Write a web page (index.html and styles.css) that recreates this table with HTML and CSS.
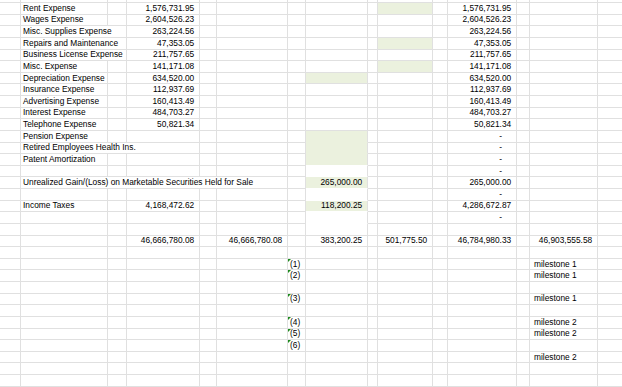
FILE: index.html
```html
<!DOCTYPE html>
<html>
<head>
<meta charset="utf-8">
<link rel="stylesheet" href="styles.css">
</head>
<body>
<table class="sheet">
<colgroup>
<col class="ca"><col class="cb"><col class="cc"><col class="cd"><col class="ce"><col class="cf"><col class="cg"><col class="ch"><col class="ci"><col class="cj"><col class="ck"><col class="cl"><col class="cm"><col class="cn"><col class="co">
</colgroup>
<tbody>
<tr class="edge"><td></td><td></td><td></td><td></td><td></td><td></td><td></td><td></td><td></td><td></td><td></td><td></td><td></td><td></td><td></td></tr>
<tr><td></td><td>Rent Expense</td><td></td><td class="n">1,576,731.95</td><td></td><td></td><td></td><td></td><td></td><td class="g"></td><td></td><td class="n">1,576,731.95</td><td></td><td></td><td></td></tr>
<tr><td></td><td>Wages Expense</td><td></td><td class="n">2,604,526.23</td><td></td><td></td><td></td><td></td><td></td><td></td><td></td><td class="n">2,604,526.23</td><td></td><td></td><td></td></tr>
<tr><td></td><td colspan="2">Misc. Supplies Expense</td><td class="n">263,224.56</td><td></td><td></td><td></td><td></td><td></td><td></td><td></td><td class="n">263,224.56</td><td></td><td></td><td></td></tr>
<tr><td></td><td colspan="2">Repairs and Maintenance</td><td class="n">47,353.05</td><td></td><td></td><td></td><td></td><td></td><td class="g"></td><td></td><td class="n">47,353.05</td><td></td><td></td><td></td></tr>
<tr><td></td><td colspan="2">Business License Expense</td><td class="n">211,757.65</td><td></td><td></td><td></td><td></td><td></td><td></td><td></td><td class="n">211,757.65</td><td></td><td></td><td></td></tr>
<tr><td></td><td>Misc. Expense</td><td></td><td class="n">141,171.08</td><td></td><td></td><td></td><td></td><td></td><td class="g"></td><td></td><td class="n">141,171.08</td><td></td><td></td><td></td></tr>
<tr><td></td><td>Depreciation Expense</td><td></td><td class="n">634,520.00</td><td></td><td></td><td></td><td class="g"></td><td></td><td></td><td></td><td class="n">634,520.00</td><td></td><td></td><td></td></tr>
<tr><td></td><td>Insurance Expense</td><td></td><td class="n">112,937.69</td><td></td><td></td><td></td><td></td><td></td><td></td><td></td><td class="n">112,937.69</td><td></td><td></td><td></td></tr>
<tr><td></td><td>Advertising Expense</td><td></td><td class="n">160,413.49</td><td></td><td></td><td></td><td></td><td></td><td></td><td></td><td class="n">160,413.49</td><td></td><td></td><td></td></tr>
<tr><td></td><td>Interest Expense</td><td></td><td class="n">484,703.27</td><td></td><td></td><td></td><td></td><td></td><td></td><td></td><td class="n">484,703.27</td><td></td><td></td><td></td></tr>
<tr><td></td><td>Telephone Expense</td><td></td><td class="n">50,821.34</td><td></td><td></td><td></td><td></td><td></td><td></td><td></td><td class="n">50,821.34</td><td></td><td></td><td></td></tr>
<tr><td></td><td>Pension Expense</td><td></td><td></td><td></td><td></td><td></td><td class="g gb"></td><td></td><td></td><td></td><td class="d">-</td><td></td><td></td><td></td></tr>
<tr><td></td><td colspan="3">Retired Employees Health Ins.</td><td></td><td></td><td></td><td class="g gb"></td><td></td><td></td><td></td><td class="d">-</td><td></td><td></td><td></td></tr>
<tr><td></td><td>Patent Amortization</td><td></td><td></td><td></td><td></td><td></td><td class="g wb"></td><td></td><td></td><td></td><td class="d">-</td><td></td><td></td><td></td></tr>
<tr><td></td><td></td><td></td><td></td><td></td><td></td><td></td><td class="wb"></td><td></td><td></td><td></td><td class="d">-</td><td></td><td></td><td></td></tr>
<tr><td></td><td colspan="5">Unrealized Gain/(Loss) on Marketable Securities Held for Sale</td><td></td><td class="g wb n">265,000.00</td><td></td><td></td><td></td><td class="n">265,000.00</td><td></td><td></td><td></td></tr>
<tr><td></td><td></td><td></td><td></td><td></td><td></td><td></td><td class="wb"></td><td></td><td></td><td></td><td class="d">-</td><td></td><td></td><td></td></tr>
<tr><td></td><td>Income Taxes</td><td></td><td class="n">4,168,472.62</td><td></td><td></td><td></td><td class="g wb n">118,200.25</td><td></td><td></td><td></td><td class="n">4,286,672.87</td><td></td><td></td><td></td></tr>
<tr><td></td><td></td><td></td><td></td><td></td><td></td><td></td><td class="wb"></td><td></td><td></td><td></td><td class="d">-</td><td></td><td></td><td></td></tr>
<tr><td></td><td></td><td></td><td></td><td></td><td></td><td></td><td></td><td></td><td></td><td></td><td></td><td></td><td></td><td></td></tr>
<tr><td></td><td></td><td></td><td class="n">46,666,780.08</td><td></td><td class="n">46,666,780.08</td><td></td><td class="n">383,200.25</td><td></td><td class="n">501,775.50</td><td></td><td class="n">46,784,980.33</td><td></td><td class="n">46,903,555.58</td><td></td></tr>
<tr><td></td><td></td><td></td><td></td><td></td><td></td><td></td><td></td><td></td><td></td><td></td><td></td><td></td><td></td><td></td></tr>
<tr><td></td><td></td><td></td><td></td><td></td><td></td><td class="t">(1)</td><td></td><td></td><td></td><td></td><td></td><td></td><td class="m">milestone 1</td><td></td></tr>
<tr><td></td><td></td><td></td><td></td><td></td><td></td><td class="t">(2)</td><td></td><td></td><td></td><td></td><td></td><td></td><td class="m">milestone 1</td><td></td></tr>
<tr><td></td><td></td><td></td><td></td><td></td><td></td><td></td><td></td><td></td><td></td><td></td><td></td><td></td><td></td><td></td></tr>
<tr><td></td><td></td><td></td><td></td><td></td><td></td><td class="t">(3)</td><td></td><td></td><td></td><td></td><td></td><td></td><td class="m">milestone 1</td><td></td></tr>
<tr><td></td><td></td><td></td><td></td><td></td><td></td><td></td><td></td><td></td><td></td><td></td><td></td><td></td><td></td><td></td></tr>
<tr><td></td><td></td><td></td><td></td><td></td><td></td><td class="t">(4)</td><td></td><td></td><td></td><td></td><td></td><td></td><td class="m">milestone 2</td><td></td></tr>
<tr><td></td><td></td><td></td><td></td><td></td><td></td><td class="t">(5)</td><td></td><td></td><td></td><td></td><td></td><td></td><td class="m">milestone 2</td><td></td></tr>
<tr><td></td><td></td><td></td><td></td><td></td><td></td><td class="t">(6)</td><td></td><td></td><td></td><td></td><td></td><td></td><td></td><td></td></tr>
<tr><td></td><td></td><td></td><td></td><td></td><td></td><td></td><td></td><td></td><td></td><td></td><td></td><td></td><td class="m">milestone 2</td><td></td></tr>
<tr><td></td><td></td><td></td><td></td><td></td><td></td><td></td><td></td><td></td><td></td><td></td><td></td><td></td><td></td><td></td></tr>
<tr><td></td><td></td><td></td><td></td><td></td><td></td><td></td><td></td><td></td><td></td><td></td><td></td><td></td><td></td><td></td></tr>
<tr><td></td><td></td><td></td><td></td><td></td><td></td><td></td><td></td><td></td><td></td><td></td><td></td><td></td><td></td><td></td></tr>
</tbody>
</table>
</body>
</html>
```
FILE: styles.css
```css
html, body {
  margin: 0;
  padding: 0;
  background: #ffffff;
  overflow: hidden;
}

.sheet {
  border-collapse: separate;
  border-spacing: 0;
  table-layout: fixed;
  width: 638px;
  font-family: "Liberation Sans", Arial, sans-serif;
  font-size: 8.35px;
  color: #000000;
}

.ca { width: 21px; }
.cb { width: 87px; }
.cc { width: 19px; }
.cd { width: 73px; }
.ce { width: 17px; }
.cf { width: 71px; }
.cg { width: 18px; }
.ch { width: 62px; }
.ci { width: 10px; }
.cj { width: 55px; }
.ck { width: 15px; }
.cl { width: 69px; }
.cm { width: 13px; }
.cn { width: 68px; }
.co { width: 40px; }

.sheet tr {
  height: 11.625px;
}

.sheet td {
  box-sizing: border-box;
  border-right: 1px solid #e0e0e0;
  border-bottom: 1px solid #e0e0e0;
  padding: 0 0 0 2px;
  line-height: 9px;
  white-space: nowrap;
  overflow: hidden;
  vertical-align: middle;
}

.sheet tr.edge {
  height: 3px;
}

.sheet tr.edge td {
  font-size: 0;
  line-height: 0;
}

.sheet td.n {
  text-align: right;
  padding-right: 4.8px;
}

.sheet td.d {
  text-align: right;
  padding-right: 14px;
}

.sheet td.g {
  background: #ebf1de;
}

.sheet td.gb {
  border-bottom-color: #ebf1de;
}

.sheet td.wb {
  border-bottom-color: #ffffff;
}

.sheet td.m {
  padding-left: 4px;
}

.sheet td.t {
  position: relative;
  overflow: visible;
}

.sheet td.t::before {
  content: "";
  position: absolute;
  top: 0;
  left: 0;
  border-top: 3px solid #1d8a1d;
  border-right: 3px solid transparent;
}
```
